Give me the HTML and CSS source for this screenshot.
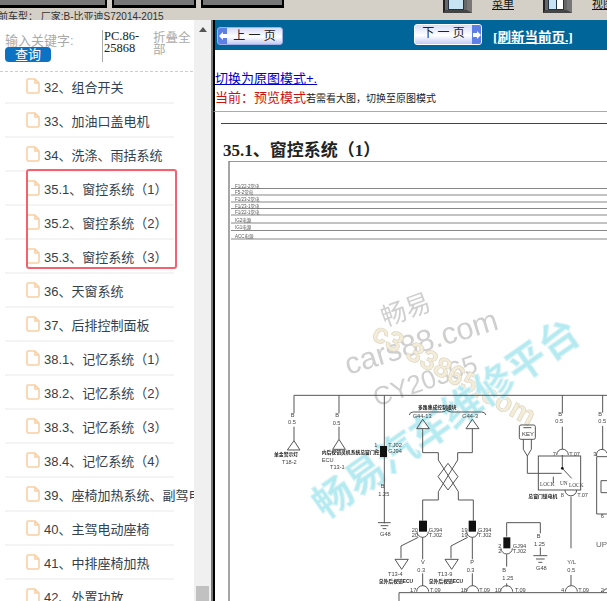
FILE: index.html
```html
<!DOCTYPE html>
<html lang="zh">
<head>
<meta charset="utf-8">
<title>维修手册</title>
<link rel="stylesheet" href="styles.css">
</head>
<body>
<div class="app">
  <header class="topbar">
    <div class="top-left">
      <div class="tabs"><span class="tab t1"></span><span class="tab t2"></span><span class="tab t3"></span></div>
      <div class="vehicle">前车型： 厂家:B-比亚迪S72014-2015</div>
    </div>
    <div class="tools">
      <span class="tool"><span class="pane"></span></span>
      <a class="tool-link" href="#">菜单</a>
      <span class="tool"><span class="pane split"></span></span>
      <a class="tool-link" href="#">视图</a>
    </div>
  </header>
  <main class="main">
    <aside class="side">
      <div class="side-body">
        <div class="search">
          <div class="search-col">
            <div class="kw">输入关键字:</div>
            <button class="query">查询</button>
          </div>
          <div class="model">PC.86-25868</div>
          <div class="fold">折叠全部</div>
        </div>
        <ul class="list">
          <li class="row"><svg class="file" viewBox="0 0 14 16"><path d="M2 1H9L13 5V13.5A1.5 1.5 0 0 1 11.500 15H2.500A1.500 1.500 0 0 1 1 13.500V2A1 1 0 0 1 2 1ZM9 1V5H13"/></svg>32、组合开关</li>
          <li class="row"><svg class="file" viewBox="0 0 14 16"><path d="M2 1H9L13 5V13.5A1.5 1.5 0 0 1 11.500 15H2.500A1.500 1.500 0 0 1 1 13.500V2A1 1 0 0 1 2 1ZM9 1V5H13"/></svg>33、加油口盖电机</li>
          <li class="row"><svg class="file" viewBox="0 0 14 16"><path d="M2 1H9L13 5V13.5A1.5 1.5 0 0 1 11.500 15H2.500A1.500 1.500 0 0 1 1 13.500V2A1 1 0 0 1 2 1ZM9 1V5H13"/></svg>34、洗涤、雨括系统</li>
          <li class="row"><svg class="file" viewBox="0 0 14 16"><path d="M2 1H9L13 5V13.5A1.5 1.5 0 0 1 11.500 15H2.500A1.500 1.500 0 0 1 1 13.500V2A1 1 0 0 1 2 1ZM9 1V5H13"/></svg>35.1、窗控系统（1）</li>
          <li class="row"><svg class="file" viewBox="0 0 14 16"><path d="M2 1H9L13 5V13.5A1.5 1.5 0 0 1 11.500 15H2.500A1.500 1.500 0 0 1 1 13.500V2A1 1 0 0 1 2 1ZM9 1V5H13"/></svg>35.2、窗控系统（2）</li>
          <li class="row"><svg class="file" viewBox="0 0 14 16"><path d="M2 1H9L13 5V13.5A1.5 1.5 0 0 1 11.500 15H2.500A1.500 1.500 0 0 1 1 13.500V2A1 1 0 0 1 2 1ZM9 1V5H13"/></svg>35.3、窗控系统（3）</li>
          <li class="row"><svg class="file" viewBox="0 0 14 16"><path d="M2 1H9L13 5V13.5A1.5 1.5 0 0 1 11.500 15H2.500A1.500 1.500 0 0 1 1 13.500V2A1 1 0 0 1 2 1ZM9 1V5H13"/></svg>36、天窗系统</li>
          <li class="row"><svg class="file" viewBox="0 0 14 16"><path d="M2 1H9L13 5V13.5A1.5 1.5 0 0 1 11.500 15H2.500A1.500 1.500 0 0 1 1 13.500V2A1 1 0 0 1 2 1ZM9 1V5H13"/></svg>37、后排控制面板</li>
          <li class="row"><svg class="file" viewBox="0 0 14 16"><path d="M2 1H9L13 5V13.5A1.5 1.5 0 0 1 11.500 15H2.500A1.500 1.500 0 0 1 1 13.500V2A1 1 0 0 1 2 1ZM9 1V5H13"/></svg>38.1、记忆系统（1）</li>
          <li class="row"><svg class="file" viewBox="0 0 14 16"><path d="M2 1H9L13 5V13.5A1.5 1.5 0 0 1 11.500 15H2.500A1.500 1.500 0 0 1 1 13.500V2A1 1 0 0 1 2 1ZM9 1V5H13"/></svg>38.2、记忆系统（2）</li>
          <li class="row"><svg class="file" viewBox="0 0 14 16"><path d="M2 1H9L13 5V13.5A1.5 1.5 0 0 1 11.500 15H2.500A1.500 1.500 0 0 1 1 13.500V2A1 1 0 0 1 2 1ZM9 1V5H13"/></svg>38.3、记忆系统（3）</li>
          <li class="row"><svg class="file" viewBox="0 0 14 16"><path d="M2 1H9L13 5V13.5A1.5 1.5 0 0 1 11.500 15H2.500A1.500 1.500 0 0 1 1 13.500V2A1 1 0 0 1 2 1ZM9 1V5H13"/></svg>38.4、记忆系统（4）</li>
          <li class="row"><svg class="file" viewBox="0 0 14 16"><path d="M2 1H9L13 5V13.5A1.5 1.5 0 0 1 11.500 15H2.500A1.500 1.500 0 0 1 1 13.500V2A1 1 0 0 1 2 1ZM9 1V5H13"/></svg>39、座椅加热系统、副驾电动座椅</li>
          <li class="row"><svg class="file" viewBox="0 0 14 16"><path d="M2 1H9L13 5V13.5A1.5 1.5 0 0 1 11.500 15H2.500A1.500 1.500 0 0 1 1 13.500V2A1 1 0 0 1 2 1ZM9 1V5H13"/></svg>40、主驾电动座椅</li>
          <li class="row"><svg class="file" viewBox="0 0 14 16"><path d="M2 1H9L13 5V13.5A1.5 1.5 0 0 1 11.500 15H2.500A1.500 1.500 0 0 1 1 13.500V2A1 1 0 0 1 2 1ZM9 1V5H13"/></svg>41、中排座椅加热</li>
          <li class="row"><svg class="file" viewBox="0 0 14 16"><path d="M2 1H9L13 5V13.5A1.5 1.5 0 0 1 11.500 15H2.500A1.500 1.500 0 0 1 1 13.500V2A1 1 0 0 1 2 1ZM9 1V5H13"/></svg>42、外置功放</li>
        </ul>
        <div class="mark"></div>
      </div>
      <div class="scrollbar"><span class="arrow"></span><span class="thumb"></span></div>
    </aside>
    <section class="doc">
      <nav class="pager">
        <a class="btn prev" href="#"><span class="cap"><svg viewBox="0 0 8 8"><path d="M0 4L4 0V2H8V6H4V8Z"/></svg></span><span class="lbl">上 一 页</span></a>
        <a class="btn next" href="#"><span class="lbl">下 一 页</span><span class="cap"><svg viewBox="0 0 8 8"><path d="M8 4L4 0V2H0V6H4V8Z"/></svg></span></a>
        <a class="refresh" href="#">[刷新当前页.]</a>
      </nav>
      <div class="mode">
        <a class="switch" href="#">切换为原图模式+.</a>
        <p class="current"><span class="red">当前：预览模式</span><span class="hint">若需看大图，切换至原图模式</span></p>
      </div>
      <div class="sheet">
        <hr class="sheet-rule">
        <h1 class="title">35.1、窗控系统（1）</h1>
        <svg class="diagram" viewBox="215 161 392 440">
          <path class="frame" d="M229 601V161H607"/>
          <g class="rails">
            <path d="M231 188.500H607M231 195H607M231 202H607M231 208.500H607M231 215H607M231 223H607M231 230.500H607M231 239H607"/>
          </g>
          <g class="tiny">
            <text x="235" y="187.500">F1/22-2常电</text><text x="235" y="194">F5-2常电</text>
            <text x="235" y="201">F1/23-2常电</text><text x="235" y="207.500">F1/23-1常电</text>
            <text x="235" y="214">F1/22-1常电</text><text x="235" y="221.500">IG2电源</text>
            <text x="235" y="229">IG1电源</text><text x="235" y="237.500">ACC电源</text>
          </g>
          <g transform="translate(270 290) scale(0.33333)">
            <g class="wm">
              <text class="wm-gray wm-a" transform="translate(345 110) rotate(-20)">畅易</text>
              <text class="wm-gray wm-b" transform="translate(235 255) rotate(-17)">cars88.com</text>
              <text class="wm-gray wm-c" transform="translate(320 350) rotate(-19)">CY20365</text>
              <text class="wm-color" transform="translate(300 145) rotate(29)">c3 33865.com</text>
              <text class="wm-cyan" transform="translate(165 690) rotate(-35)">畅易汽车维修平台</text>
            </g>
            <g class="w">
              <path d="M1011 316H72V370M207 316V370M343 316V700M877 316V370M998 316V368"/>
              <path d="M72 410V452M207 410V448M877 410V478M998 408V480"/>
              <path d="M52 480L72 452L90 480ZM188 478L207 448L226 478Z"/>
              <path d="M324 698H362M332 707H355M338 716H349"/>
              <path d="M418 375Q420 366 430 366H515Q525 366 530 360Q535 366 545 366H635Q645 366 648 375"/>
              <path d="M440 416L458 388L478 416ZM588 416L607 388L627 416Z"/>
              <path d="M458 416V488H505V510L565 605V630H610V692M607 416V488H563V510L505 605V630H458V692"/>
              <path d="M534 520L564 560L534 600L504 560Z"/>
              <path d="M445 742L393 768V805M375 808H415L395 838ZM593 742L543 768V805M525 808H565L545 838Z"/>
              <path d="M458 742V808M458 850V888M607 742V808M607 850V888"/>
              <path d="M710 740V698H811V730M710 793V830M710 880V890M811 772V795M790 797H832M798 807H824M805 817H817"/>
              <path d="M760 448V478L772 498L784 478V448M772 498V550H875"/>
              <rect x="748" y="405" width="48" height="43" rx="5"/>
              <path d="M760 413H784"/>
              <rect x="805" y="498" width="127" height="102"/>
              <path d="M860 495A17 17 0 0 1 895 495M885 600A17 17 0 0 0 920 600"/>
              <path d="M877 495V535L905 565M903 620V775M903 855V888M850 560V580"/>
              <path d="M1011 500H980V672H1011M1011 572H993V608H1011M980 498A16 16 0 0 1 1011 490"/>
              <path d="M387 933V908H1011"/>
              <path d="M440 905A18 18 0 0 1 476 905M590 905A18 18 0 0 1 626 905M692 905A18 18 0 0 1 728 905M886 905A18 18 0 0 1 922 905M1000 905A12 12 0 0 1 1011 896"/>
              <path d="M441 725A17 17 0 0 0 475 725M590 725A17 17 0 0 0 624 725M693 775A17 17 0 0 0 727 775"/>
            </g>
            <g class="blk">
              <rect x="330" y="468" width="21" height="33"/>
              <rect x="447" y="692" width="24" height="33"/>
              <rect x="596" y="692" width="22" height="33"/>
              <rect x="700" y="742" width="21" height="33"/>
              <circle cx="877" cy="535" r="4"/>
            </g>
            <g class="lb">
              <text x="62" y="380">B</text><text x="54" y="402">0.5</text>
              <text x="196" y="382">B</text><text x="188" y="404">0.5</text>
              <text x="12" y="498" class="bd">单金警示灯</text><text x="36" y="522">T18-2</text>
              <text x="155" y="492" class="bd">内后视镜灵机系统总窗门控</text><text x="155" y="515">ECU</text><text x="180" y="538">T13-1</text>
              <text x="313" y="470">1</text><text x="355" y="470">T.J02</text><text x="316" y="488">1</text><text x="355" y="488">GJ94</text>
              <text x="332" y="593">B</text><text x="325" y="617">1.25</text><text x="330" y="738">G48</text>
              <text x="444" y="356" class="bd">多路集成控制模块</text><text x="428" y="383">G44-13</text><text x="577" y="383">G44-3</text>
              <text x="425" y="725">20</text><text x="425" y="741">20</text><text x="476" y="725">GJ94</text><text x="476" y="741">T.J02</text>
              <text x="574" y="725">19</text><text x="574" y="741">19</text><text x="624" y="725">GJ94</text><text x="624" y="741">T.J02</text>
              <text x="685" y="773">2</text><text x="685" y="790">2</text><text x="728" y="773">GJ94</text><text x="728" y="790">T.J02</text>
              <text x="800" y="745">B</text><text x="792" y="767">1.25</text><text x="798" y="840">G48</text>
              <text x="453" y="821">V</text><text x="442" y="845">0.3</text>
              <text x="601" y="821">P</text><text x="590" y="845">0.3</text>
              <text x="697" y="847">B</text><text x="697" y="870">1.25</text>
              <text x="354" y="857">T13-4</text><text x="326" y="880" class="bd">总外后视镜ECU</text>
              <text x="503" y="857">T13-9</text><text x="476" y="880" class="bd">总外后视镜ECU</text>
              <text x="420" y="907">17</text><text x="480" y="907">T.09</text>
              <text x="572" y="907">18</text><text x="628" y="907">T.09</text>
              <text x="674" y="907">10</text><text x="735" y="907">T.09</text>
              <text x="873" y="907">4</text><text x="925" y="907">T.09</text><text x="992" y="907">2</text>
              <text x="865" y="377">B</text><text x="856" y="400">0.5</text>
              <text x="985" y="377">B</text><text x="985" y="400">0.5</text>
              <text x="848" y="497">7</text><text x="898" y="497">T.07</text><text x="970" y="497">3</text>
              <text x="756" y="438" class="key">KEY</text>
              <text x="810" y="587" class="sf">LOCK</text><text x="870" y="585" class="sf">UN</text><text x="897" y="590" class="sf">LOCK</text>
              <text x="775" y="623" class="bd">总窗门锁电机</text>
              <text x="872" y="620">8</text><text x="922" y="620">T.07</text>
              <text x="892" y="821">Y/L</text><text x="892" y="845">0.5</text>
              <text x="992" y="683">6</text>
              <text x="978" y="771" class="up">UP</text>
            </g>
          </g>
        </svg>
      </div>
    </section>
  </main>
</div>
</body>
</html>
```

FILE: styles.css
```css
* { box-sizing: border-box; }
html, body { margin: 0; padding: 0; }
body { font-family: "Liberation Sans", "Noto Sans CJK SC", sans-serif; background: #fff; }
.app { width: 607px; height: 601px; overflow: hidden; display: flex; flex-direction: column; }

.topbar { height: 20px; flex: none; background: #d4d0c8; display: flex; justify-content: space-between; overflow: hidden; }
.top-left { width: 300px; overflow: hidden; }
.tabs { display: flex; gap: 5px; height: 8px; }
.tab { height: 8px; background: #777; border: 2px solid #000; border-top: 0; border-bottom-width: 3px; }
.t1 { width: 107px; border-left: 0; }
.t2 { width: 84px; }
.t3 { width: 83px; }
.vehicle { margin: 3px 0 0 -2px; font-size: 10px; line-height: 11px; color: #333; white-space: nowrap; }
.tools { display: flex; align-items: flex-start; width: 164px; flex: none; }
.tool { width: 29px; height: 13px; flex: none; background: #666; border-left: 2px solid #222; border-bottom: 3px solid #444; border-right: 5px solid #777; padding-left: 3px; display: block; }
.pane { display: block; width: 16px; height: 10px; background: #c6e4f4; border: 1px solid #234; border-top: 0; }
.pane.split { background: linear-gradient(90deg, #c6e4f4 48%, #234 48%, #234 56%, #fff 56%); }
.tool-link { width: 71px; flex: none; font-size: 11px; line-height: 12px; margin-top: -2px; padding-left: 20px; color: #111; white-space: nowrap; }

.main { flex: 1; display: flex; min-height: 0; }
.side { width: 211px; flex: none; display: flex; }
.side-body { width: 194px; flex: none; position: relative; overflow: hidden; background: #fff; }
.search { height: 52px; margin-right: 1px; padding: 10px 0 0 5px; border-bottom: 1px dashed #ccc; display: flex; align-items: flex-start; }
.search-col { width: 97px; flex: none; }
.kw { height: 17px; padding-top: 2px; font-size: 13px; line-height: 17px; color: #aaa; white-space: nowrap; }
.query { display: block; width: 46px; height: 15px; padding: 0; border: 0; border-radius: 4px; background: #0b72c4; color: #fff; font: 13px/15px "Liberation Sans", "Noto Sans CJK SC", sans-serif; }
.model { width: 51px; flex: none; height: 32px; padding-left: 1px; border-left: 1px solid #aaa; font: 12.500px/12px "Liberation Serif", serif; color: #222; }
.fold { width: 39px; flex: none; padding-top: 2px; font-size: 12.500px; line-height: 12px; color: #aaa; }
.list { margin: -2px 0 0; padding: 0; list-style: none; }
.row { height: 34px; width: 169px; margin-left: 5px; padding-left: 21px; border-bottom: 2px solid #f4f4f4; display: flex; align-items: center; font-size: 13px; color: #33414e; white-space: nowrap; }
.file { width: 14px; height: 16px; flex: none; margin-right: 4px; }
.file path { fill: none; stroke: #f9d0a2; stroke-width: 1.600; }
.mark { position: absolute; left: 26px; top: 149px; width: 151px; height: 100px; border: 2.500px solid #f4626f; border-radius: 3px; }
.scrollbar { width: 17px; flex: none; background: #f0f0f0; display: flex; flex-direction: column; align-items: center; }
.arrow { width: 0; height: 0; margin-top: 7px; border: 4px solid transparent; border-top: 0; border-bottom: 5px solid #555; }
.thumb { width: 13px; height: 15px; margin-top: auto; background: #c1c1c1; }

.doc { flex: 1; min-width: 0; border-left: 2px solid #777; background: #fff; display: flex; flex-direction: column; }
.pager { height: 30px; flex: none; background: #006699; border-left: 2px solid #000; padding-left: 2px; display: flex; align-items: center; }
.btn { display: flex; height: 18px; align-items: stretch; border: 1px solid #9fb0e8; border-radius: 3px; background: linear-gradient(#d8dcfa, #fff 55%, #c4cbf4); text-decoration: none; color: #222; font-size: 12px; line-height: 16px; overflow: hidden; }
.prev { width: 66px; margin-top: 1px; }
.next { width: 68px; height: 21px; margin-left: 131px; margin-top: -1px; border-color: #fff; }
.cap { width: 9px; flex: none; background: #5d7fe6; display: flex; align-items: center; justify-content: center; }
.cap svg { width: 8px; height: 8px; }
.cap path { fill: #fff; }
.lbl { flex: 1; text-align: center; white-space: nowrap; }
.refresh { margin-left: 11px; margin-top: 5px; color: #fff; font: bold 13.500px/14px "Liberation Serif", "Noto Sans CJK SC", serif; white-space: nowrap; }
.mode { height: 62px; flex: none; border-left: 2px solid #000; padding-top: 21px; border-bottom: 1px solid #aaa; }
.switch { display: block; font-size: 13px; line-height: 15px; color: #0000cc; white-space: nowrap; }
.current { margin: 3px 0 0; line-height: 15px; white-space: nowrap; }
.red { font-size: 13px; color: #cc1111; }
.hint { font-size: 10px; color: #222; }
.sheet { flex: 1; min-height: 0; border-left: 2px solid #000; overflow: hidden; }
.sheet-rule { margin: 11px 0 0 6px; border: 0; border-top: 1px solid #444; height: 0; }
.title { margin: 17px 0 0 8px; font: bold 17px/19px "Liberation Serif", "Noto Sans CJK SC", serif; color: #222; white-space: nowrap; height: 20px; }
.diagram { display: block; width: 392px; height: 440px; filter: blur(0.35px); }
.frame { fill: none; stroke: #777; stroke-width: 1.300; }
.rails path { fill: none; stroke: #888; stroke-width: 1.200; }
.tiny text { font-size: 4.500px; fill: #555; }
.w path, .w rect { fill: none; stroke: #555; stroke-width: 3; }
.blk rect, .blk circle { fill: #111; }
.lb text { font-size: 17px; fill: #444; }
.lb .bd { font-size: 14.500px; font-weight: 700; fill: #222; }
.lb .key { font-size: 18px; fill: #333; }
.lb .sf { font-size: 16px; font-family: "Liberation Serif", serif; }
.lb .up { font-size: 24px; fill: #666; }
.wm-gray { fill: #cfcfcf; }
.wm-a { font-size: 76px; }
.wm-b { font-size: 92px; }
.wm-c { font-size: 78px; }
.wm-color { font-size: 84px; font-weight: 700; fill: #f3ecd8; stroke: #ddd6c4; stroke-width: 2; }
.wm-cyan { font-size: 118px; font-weight: 700; fill: #b6eaf1; stroke: #dcf4f7; stroke-width: 3; }
```
